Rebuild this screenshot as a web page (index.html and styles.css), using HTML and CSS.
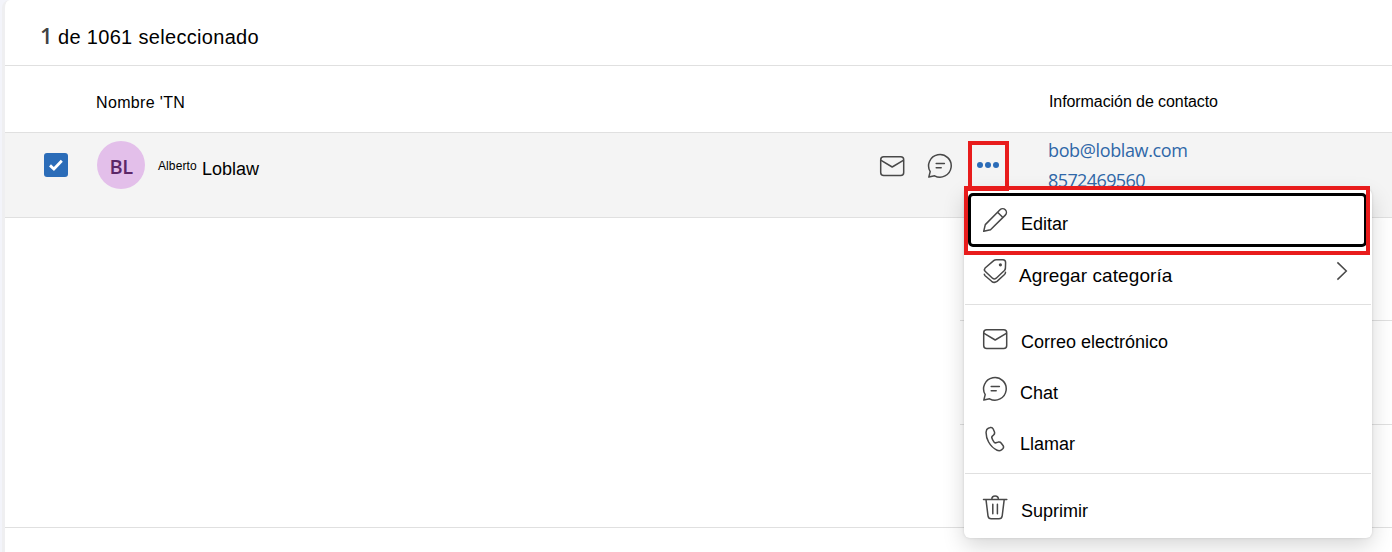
FILE: index.html
```html
<!DOCTYPE html>
<html lang="es">
<head>
  <meta charset="UTF-8" />
  <meta name="viewport" content="width=device-width, initial-scale=1.0"/>
  <title>Contactos</title>
  <link rel="stylesheet" href="styles.css">
</head>
<body>
  <svg class="defs" width="0" height="0">
    <symbol id="mail" viewBox="0 0 26 26">
      <rect x="1.7" y="3.8" width="23" height="18.6" rx="3"/>
      <path d="M2.1 7.4 L13.2 14 L24.3 7.4"/>
    </symbol>
    <symbol id="chat" viewBox="0 0 26 26">
      <path d="M3.2 18.6 A11.3 11.3 0 1 1 7.6 22.8 L1.8 24.1 Z"/>
      <path d="M9.2 10.4 H17.4 M9.2 14.8 H14.2"/>
    </symbol>
    <symbol id="pencil" viewBox="0 0 26 26">
      <path d="M1.7 24.3 L3.3 17.6 L18 2.8 A3.7 3.7 0 0 1 23.3 8.1 L8.5 22.8 Z M15.6 5.2 L20.9 10.5"/>
    </symbol>
    <symbol id="tag" viewBox="0 0 26 26">
      <path d="M14.2 1.7 L21 1.7 Q23.6 1.8 23.6 4.4 L23.4 10.4 Q23.3 11.6 22.4 12.5 L14.2 20.2 Q12.3 21.7 10.5 20.2 L3.1 13.3 Q1.7 11.6 3.1 10 L11.7 2.6 Q12.8 1.7 14.2 1.7 Z"/>
      <path d="M2.3 16.2 Q2.4 17.1 3.1 17.8 L9.6 23.3 Q12.3 25.4 15 23.4 L22.5 16.5 Q23.5 15.5 23.5 14.2"/>
      <circle class="dot" cx="18.4" cy="6.8" r="1.6"/>
    </symbol>
    <symbol id="phone" viewBox="0 0 26 26">
      <path d="M6.3 2.2 L8.2 1.6 Q10.3 1.1 11.2 3 L12.4 5.7 Q13.1 7.6 11.6 9 L10.1 10.4 Q9.6 10.9 9.8 11.8 Q10.4 14 12.2 16.2 Q13 17.1 14 16.8 L16.3 16.1 Q18.2 15.7 19.3 17.2 L21 19.5 Q22.2 21.3 20.8 22.8 L19.5 23.9 Q17.5 25.2 15.1 24.2 Q9.9 21.9 6.6 16 Q3.9 11.1 4.1 6 Q4.3 3 6.3 2.2 Z"/>
    </symbol>
    <symbol id="trash" viewBox="0 0 26 26">
      <path d="M1.5 4.4 H24.8 M9.8 4.4 A3.3 3.3 0 0 1 16.4 4.4 M4 4.6 L6 20.9 Q6.4 23.8 9.2 23.8 H17 Q19.8 23.8 20.2 20.9 L22.2 4.6 M10.8 9.2 V18.8 M15.4 9.2 V18.8"/>
    </symbol>
  </svg>

  <div class="page">
    <div class="toolbar">
      <span class="count">1</span>
      <span class="summary">de 1061 seleccionado</span>
    </div>

    <div class="columns">
      <span class="col-name">Nombre 'TN</span>
      <span class="col-info">Información de contacto</span>
    </div>

    <div class="contact">
      <div class="checkbox">
        <svg width="24" height="24" viewBox="0 0 24 24"><path d="M6 12.4 L9.9 16 L17.8 7.8"/></svg>
      </div>
      <div class="avatar">BL</div>
      <div class="name"><span class="first">Alberto</span><span class="last">Loblaw</span></div>
      <div class="actions">
        <svg class="icon"><use href="#mail"/></svg>
        <svg class="icon"><use href="#chat"/></svg>
        <div class="more"><i></i><i></i><i></i></div>
      </div>
      <div class="links">
        <a class="email">bob@loblaw.com</a>
        <a class="tel">8572469560</a>
      </div>
    </div>

    <div class="empty-row short"></div>
    <div class="empty-row short"></div>
    <div class="empty-row"></div>
  </div>

  <div class="menu">
    <div class="item focused"><svg class="icon"><use href="#pencil"/></svg><span class="edit">Editar</span></div>
    <div class="item category">
      <svg class="icon"><use href="#tag"/></svg><span class="cat">Agregar categoría</span>
      <svg class="chevron" viewBox="0 0 12 20"><path d="M1.4 1.4 L10.3 10 L1.4 18.6"/></svg>
    </div>
    <hr>
    <div class="item"><svg class="icon"><use href="#mail"/></svg><span class="mailto">Correo electrónico</span></div>
    <div class="item"><svg class="icon"><use href="#chat"/></svg><span class="chat">Chat</span></div>
    <div class="item"><svg class="icon"><use href="#phone"/></svg><span class="call">Llamar</span></div>
    <hr>
    <div class="item"><svg class="icon"><use href="#trash"/></svg><span class="delete">Suprimir</span></div>
  </div>

  <!-- red highlight boxes -->
  <div class="mark mark-more"></div>
  <div class="mark mark-edit"></div>
</body>
</html>
```

FILE: styles.css
```css
* {
  box-sizing: border-box;
}

body {
  margin: 0;
  height: 552px;
  overflow: hidden;
  position: relative;
  font-family: "Liberation Sans", Arial, sans-serif;
  color: #000;
  background: #f3f4fa;
}

.defs {
  display: block;
}

.page {
  margin-left: 2px;
  height: 552px;
  background: #fff;
  border-left: 3px solid #efeff1;
  border-top-left-radius: 8px;
}

.toolbar {
  height: 66px;
  padding-left: 35px;
  display: flex;
  align-items: baseline;
  border-bottom: 1px solid #e0e0e0;
}

.count {
  width: 18px;
  font: 600 22px/68px "Open Sans", sans-serif;
  color: #424242;
}

.summary {
  font-size: 20px;
  letter-spacing: .32px;
  line-height: 74px;
}

.columns {
  height: 67px;
  display: flex;
  border-bottom: 1px solid #e0e0e0;
  line-height: 73px;
  white-space: nowrap;
}

.col-name {
  width: 1044px;
  padding-left: 91px;
  font-size: 16px;
  letter-spacing: .35px;
}

.col-info {
  font-size: 16px;
  line-height: 71px;
  letter-spacing: -.08px;
}

.contact {
  height: 85px;
  display: flex;
  align-items: flex-start;
  padding: 8px 0 0 39px;
  background: #f4f4f4;
  border-bottom: 1px solid #e0e0e0;
}

.checkbox {
  width: 24px;
  height: 24px;
  margin: 12px 29px 0 0;
  border-radius: 3px;
  background: #2b6cb8;
}

.checkbox path {
  fill: none;
  stroke: #fff;
  stroke-width: 2.8;
}

.avatar {
  width: 48px;
  height: 48px;
  border-radius: 50%;
  background: #e3bfea;
  color: #5c2768;
  font: 600 20px/51px "Open Sans", sans-serif;
  letter-spacing: -.5px;
  text-align: center;
}

.name {
  width: 735px;
  padding-left: 13px;
  display: flex;
  white-space: nowrap;
}

.first {
  width: 44px;
  font-size: 12px;
  letter-spacing: .1px;
  line-height: 50px;
}

.last {
  font-size: 18px;
  line-height: 57px;
}

.actions {
  width: 168px;
  height: 48px;
  display: flex;
  align-items: center;
  gap: 22px;
}

.icon {
  width: 26px;
  height: 26px;
  flex: none;
  fill: none;
  stroke: #484848;
  stroke-width: 1.5;
  stroke-linejoin: round;
  stroke-linecap: round;
}

.actions .icon {
  position: relative;
  top: 1px;
  left: -1px;
}

.dot {
  fill: #484848;
  stroke: none;
}

.more {
  width: 24px;
  display: flex;
  justify-content: center;
  gap: 2px;
}

.more i {
  width: 6px;
  height: 6px;
  border-radius: 50%;
  background: #2b6cb8;
}

.links {
  display: flex;
  flex-direction: column;
  margin-top: -6px;
  font: 18px/30px "Open Sans", sans-serif;
  letter-spacing: -.37px;
  color: #2f67a8;
}

.tel {
  letter-spacing: -.6px;
}

.empty-row {
  height: 103px;
  border-bottom: 1px solid #e0e0e0;
}

.short {
  margin-left: 955px;
}

.short + .short {
  height: 104px;
}

.menu {
  position: absolute;
  left: 964px;
  top: 189px;
  width: 408px;
  height: 349px;
  padding-top: 4px;
  background: #fff;
  border-radius: 6px;
  box-shadow: 0 8px 22px rgba(0, 0, 0, .16), 0 0 3px rgba(0, 0, 0, .12);
}

.item {
  height: 50px;
  padding-left: 18px;
  display: flex;
  align-items: center;
  gap: 13px;
  font-size: 18px;
  white-space: nowrap;
}

.item span {
  padding-top: 7px;
}

.focused {
  width: 399px;
  height: 54px;
  margin-left: 4px;
  padding-left: 11px;
  border: 3px solid #000;
  border-radius: 5px;
}

.item .edit,
.item .chat {
  padding-top: 9px;
}

.item .call {
  padding-top: 11px;
}

.item .chat,
.item .call {
  margin-left: -1px;
}

.category {
  height: 48px;
}

.item .cat {
  font-size: 19px;
  letter-spacing: .08px;
  padding-top: 9px;
  margin-left: -2px;
}

.chevron {
  width: 12px;
  height: 20px;
  margin-left: auto;
  margin-right: 24px;
  fill: none;
  stroke: #484848;
  stroke-width: 1.5;
}

hr {
  height: 1px;
  margin: 9px 1px;
  border: 0;
  background: #e0e0e0;
}

.mark {
  position: absolute;
  border: 4px solid #e81c1c;
}

.mark-more {
  left: 968px;
  top: 141px;
  width: 41px;
  height: 50px;
}

.mark-edit {
  left: 964px;
  top: 186px;
  width: 406px;
  height: 69px;
}
```
